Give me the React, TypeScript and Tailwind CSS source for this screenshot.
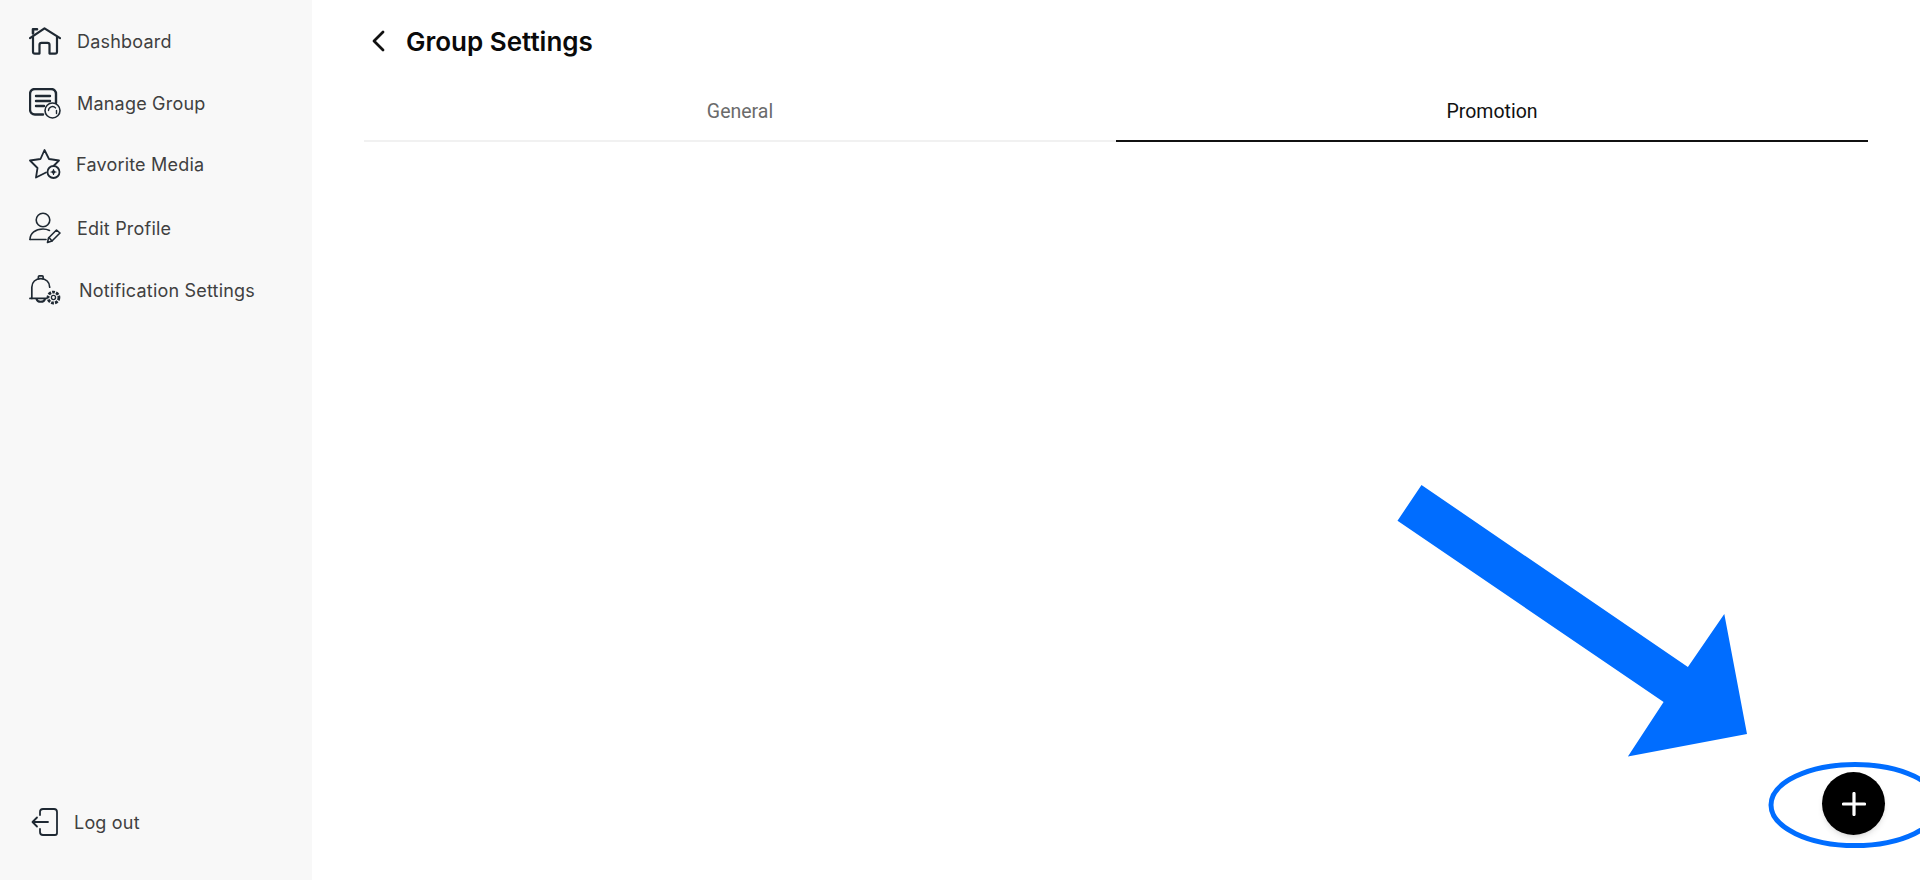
import { ReactNode } from 'react';

const HomeIcon = () => (
  <svg width="32" height="28" viewBox="0 0 32 30" preserveAspectRatio="none" fill="none" stroke="#1f2933" strokeWidth="2.200" strokeLinecap="round" strokeLinejoin="round">
    <path d="M1 12 15.500 1.500 31 12" />
    <path d="M4 2.500v4.500M4 2.500H8" strokeWidth="2.600" />
    <path d="M4 11v15.500a2 2 0 0 0 2 2h4.500V19a2 2 0 0 1 2-2h6a2 2 0 0 1 2 2v9.500H26a2 2 0 0 0 2-2V11" />
  </svg>
);

const GroupIcon = () => (
  <svg width="32" height="31" viewBox="0 0 32 31" fill="none" stroke="#1f2933" strokeWidth="2.400" strokeLinecap="round">
    <path d="M14 26.500H6a5 5 0 0 1-5-5V6a5 5 0 0 1 5-5h16a5 5 0 0 1 5 5v9" />
    <path d="M7 8h14M7 13h14M7 18h8" strokeWidth="2.400" />
    <circle cx="23.500" cy="22.500" r="7.500" fill="#f8f8f8" strokeWidth="1.600" />
    <path d="M19.500 22.500a4 4 0 0 1 7-2.600M27.500 22.500v3" strokeWidth="1.400" />
  </svg>
);

const StarIcon = () => (
  <svg width="32" height="31" viewBox="0 0 32 31" fill="none" stroke="#1f2933" strokeWidth="1.800" strokeLinecap="round" strokeLinejoin="round">
    <path d="M17 23.500 7 28.500 8.500 19 1 11.500l10.500-1.500L15.500 1l4.500 9 10 1.500-5 5" />
    <circle cx="24.500" cy="23" r="6" fill="#f8f8f8" />
    <circle cx="24.500" cy="23" r="1.800" fill="#1f2933" stroke="none" />
    <path d="M24.500 20.500v5M22 23h5" strokeWidth="1.200" />
  </svg>
);

const ProfileIcon = () => (
  <svg width="32" height="32" viewBox="0 0 32 32" fill="none" stroke="#1f2933" strokeWidth="1.600" strokeLinecap="round" strokeLinejoin="round">
    <circle cx="14" cy="8" r="6.800" />
    <path d="M1 27.500C1 21 6.500 17 14 17c2.500 0 4.500.5 6.500 1.500" />
    <path d="M1 27.500h16" />
    <path d="M18.500 30.500 19.500 26 27.500 18 31 21 23 29Z" />
    <path d="M20 25.500 23 29" />
  </svg>
);

const BellIcon = () => (
  <svg width="34" height="32" viewBox="0 0 34 32" fill="none" stroke="#1f2933" strokeWidth="1.800" strokeLinecap="round" strokeLinejoin="round">
    <path d="M10 4V2a1 1 0 0 1 1-1h3a1 1 0 0 1 1 1v2" />
    <path d="M3 25V13c0-5.500 4-9 9.500-9s9.500 3.500 9.500 9" />
    <path d="M1 25h18" />
    <path d="M8 25.500c.5 2 2.300 3 4.500 3s4-1 4.500-3" strokeWidth="2.200" />
    <circle cx="26" cy="24" r="5.800" fill="#f8f8f8" strokeWidth="3" strokeDasharray="3 1.200" strokeLinecap="butt" />
    <circle cx="26" cy="24" r="2.200" strokeWidth="1.400" />
  </svg>
);

const LogoutIcon = () => (
  <svg width="28" height="28" viewBox="0 0 28 28" fill="none" stroke="#1f2933" strokeWidth="1.800" strokeLinecap="round" strokeLinejoin="round">
    <path d="M9 7V4a3 3 0 0 1 3-3h11a3 3 0 0 1 3 3v21a2 2 0 0 1-2 2H12a3 3 0 0 1-3-3v-3" />
    <path d="M17 14H2M6 9.500 1.500 14 6 18.500" />
  </svg>
);

function NavItem({ icon, label, className }: { icon: ReactNode; label: string; className: string }) {
  return (
    <div className={`flex h-8 items-center ${className}`}>
      <span className="flex w-8 shrink-0 items-center justify-center">{icon}</span>
      <span className="whitespace-nowrap text-[18px] tracking-[0.2px] text-[#404040]">{label}</span>
    </div>
  );
}

export default function App() {
  return (
    <div className="relative flex h-[880px] w-[1920px] overflow-hidden bg-white font-['Inter',sans-serif]">
      <aside className="flex w-[312px] shrink-0 flex-col justify-between bg-[#f8f8f8] pb-[42px] pl-[29px] pt-[25px]">
        <nav className="flex flex-col">
          <NavItem icon={<HomeIcon />} label="Dashboard" className="gap-4" />
          <NavItem icon={<GroupIcon />} label="Manage Group" className="mt-[30px] gap-4" />
          <NavItem icon={<StarIcon />} label="Favorite Media" className="mt-[29px] gap-[15px]" />
          <NavItem icon={<ProfileIcon />} label="Edit Profile" className="mt-[32px] gap-4" />
          <NavItem icon={<BellIcon />} label="Notification Settings" className="mt-[30px] gap-[18px]" />
        </nav>
        <NavItem icon={<LogoutIcon />} label="Log out" className="gap-[13px]" />
      </aside>

      <main className="flex-1 px-[52px] pt-[25px]">
        <div className="flex h-8 items-center gap-[21px] pl-[7px]">
          <svg width="14" height="22" viewBox="0 0 14 22" fill="none" stroke="#111111" strokeWidth="2.800" strokeLinecap="round" strokeLinejoin="round">
            <path d="M12 2 3 11l9 9" />
          </svg>
          <h1 className="text-[26px] font-semibold text-[#0a0a0a]">Group Settings</h1>
        </div>
        <div className="mt-[27px] flex">
          <div className="flex h-[58px] flex-1 items-center justify-center border-b-2 border-[#f1f1f1] font-['Roboto',sans-serif] text-[19.500px] text-[#6b6b6b]">
            General
          </div>
          <div className="flex h-[58px] flex-1 items-center justify-center border-b-2 border-[#111111] font-['Roboto',sans-serif] text-[19.500px] text-[#111111]">
            Promotion
          </div>
        </div>
      </main>

      {/* floating add button */}
      <button className="absolute left-[1822px] top-[772px] flex h-[63px] w-[63px] items-center justify-center rounded-full bg-black shadow-md">
        <svg width="24" height="24" viewBox="0 0 24 24" fill="none" stroke="#ffffff" strokeWidth="3.200" strokeLinecap="round">
          <path d="M12 1.500v21M1.500 12h21" />
        </svg>
      </button>

      {/* blue annotation drawn over the screenshot */}
      <svg className="pointer-events-none absolute left-0 top-0" width="1920" height="880" viewBox="0 0 1920 880" fill="none">
        <polygon points="1421.500,485 1397.500,520.700 1663.600,702 1627.900,756.500 1747,734 1724.300,614 1687.900,667" fill="#006dff" />
        <ellipse cx="1855" cy="805" rx="84" ry="40.500" stroke="#006dff" strokeWidth="5" />
      </svg>
    </div>
  );
}
